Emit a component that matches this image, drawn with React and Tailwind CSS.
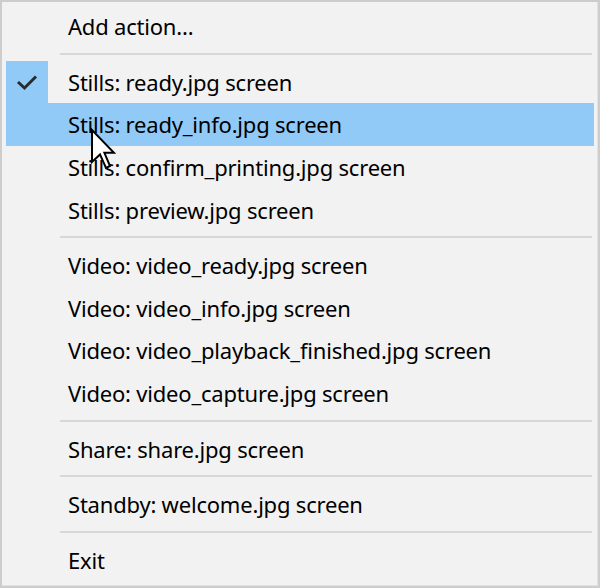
import React from "react";

const items = [
  { t: "Add action..." },
  { sep: true },
  { t: "Stills: ready.jpg screen", checked: true },
  { t: "Stills: ready_info.jpg screen", hover: true },
  { t: "Stills: confirm_printing.jpg screen" },
  { t: "Stills: preview.jpg screen" },
  { sep: true },
  { t: "Video: video_ready.jpg screen" },
  { t: "Video: video_info.jpg screen" },
  { t: "Video: video_playback_finished.jpg screen" },
  { t: "Video: video_capture.jpg screen" },
  { sep: true },
  { t: "Share: share.jpg screen" },
  { sep: true },
  { t: "Standby: welcome.jpg screen" },
  { sep: true },
  { t: "Exit" },
];

export default function App() {
  return (
    <div className="w-[600px] h-[588px] bg-[#f2f2f2] border-2 border-[#cdcdcd] relative overflow-hidden">
      <div className="absolute inset-0 pointer-events-none border-r border-b border-[#e2e2e2]" />
      <div
        className="flex flex-col pt-[3px] px-[4px] text-black"
        style={{ fontFamily: '"Noto Sans", "Open Sans", sans-serif' }}
      >
        {items.map((it, i) =>
          it.sep ? (
            <div key={i} className="h-[13px] flex items-center">
              <div className="h-[2px] bg-[#d7d7d7] ml-[54px] mr-[2px] flex-1" />
            </div>
          ) : (
            <div
              key={i}
              className={`h-[42.6px] flex items-center ${it.hover ? "bg-[#91c9f7]" : ""}`}
            >
              <div
                className={`w-[42px] h-full flex items-center justify-center shrink-0 ${
                  it.checked ? "bg-[#91c9f7]" : ""
                }`}
              >
                {it.checked && (
                  <svg width="24" height="18" viewBox="0 0 24 18">
                    <polyline
                      points="3,9 9.5,15 21,3.5"
                      fill="none"
                      stroke="#2b2b2b"
                      strokeWidth="3"
                    />
                  </svg>
                )}
              </div>
              <span className="ml-[20px] text-[22px] leading-none tracking-[-0.2px] whitespace-nowrap">
                {it.t}
              </span>
            </div>
          )
        )}
      </div>
      <svg
        className="absolute left-[88px] top-[126px]"
        width="26"
        height="44"
        viewBox="0 0 13 22"
      >
        <polygon
          points="1,1 1,17 5,13.2 8,20 10,19 7.2,12.4 12,12.4"
          fill="#ffffff"
          stroke="#000000"
          strokeWidth="1"
          strokeLinejoin="miter"
        />
      </svg>
    </div>
  );
}
